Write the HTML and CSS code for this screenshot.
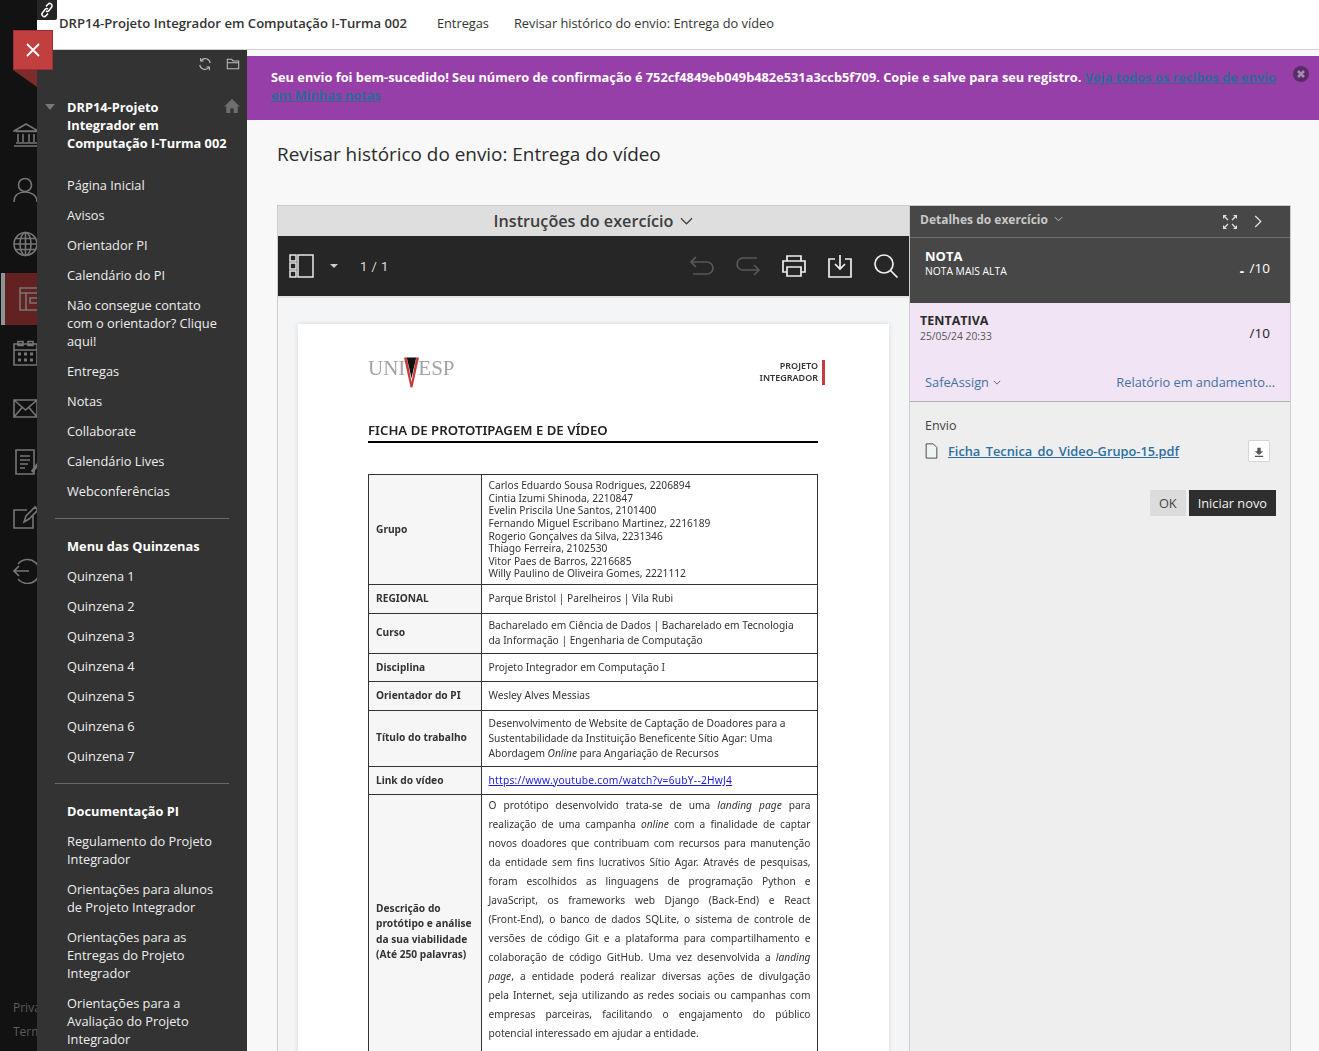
FILE: index.html
```html
<!DOCTYPE html>
<html lang="pt-BR">
  <head>
    <meta charset="UTF-8" />
    <meta name="viewport" content="width=device-width, initial-scale=1.0" />
    <title>Revisar histórico do envio</title>
    <link rel="stylesheet" href="styles.css">
  </head>
  <body>
    <div class="app">
      <!-- rail behind the course menu -->
      <nav class="rail">
        <div class="rail-item"><svg viewBox="0 0 26 26"><path d="M1 9 13 2l12 7zM3 9.500h21M5 12v8M10 12v8M16 12v8M21 12v8M3 21h21M1 24h25"/></svg></div>
        <div class="rail-item"><svg viewBox="0 0 26 26"><circle cx="12" cy="8" r="6.500"/><path d="M1 25c0-7 5-10 11-10s12 3 12 10"/></svg></div>
        <div class="rail-item"><svg viewBox="0 0 26 26"><circle cx="12.500" cy="13" r="11.500"/><ellipse cx="12.500" cy="13" rx="5.500" ry="11.500"/><path d="M12.500 1.500v23M1 13h23M2.500 7.500h20M2.500 18.500h20"/></svg></div>
        <div class="rail-item active"><svg viewBox="0 0 26 26"><path d="M1 2h24v22H1zM1 7h24M7 7v17M11 12h9v5h-9z"/></svg></div>
        <div class="rail-item"><svg viewBox="0 0 26 26"><path d="M1 4h23v21H1zM1 10h23M5 1.500h5v4H5zM15 1.500h5v4h-5z"/><path class="dots" d="M5 14h3M11 14h3M17 14h3M5 20h3M11 20h3M17 20h3"/></svg></div>
        <div class="rail-item"><svg viewBox="0 0 26 26"><path d="M1 5h23v17H1zM1 5l11.500 10L24 5M1 22l8.500-10M24 22l-8.500-10"/></svg></div>
        <div class="rail-item"><svg viewBox="0 0 26 26"><path d="M3 1h18v24H3zM7 7h10M7 11h10M7 15h8M7 19h5"/><path class="dots" d="m19 23 6-8"/></svg></div>
        <div class="rail-item"><svg viewBox="0 0 26 26"><path d="M20 12v12H1V6h13M11 18l2-6L22 3l3 3-9 9z"/></svg></div>
        <div class="rail-item"><svg viewBox="0 0 26 26"><path d="M5 6a12 12 0 1 1 0 15M1 13h15M6 8l-5 5 5 5"/></svg></div>
        <div class="rail-foot">
          <p>Privacy</p>
          <p>Terms</p>
        </div>
      </nav>

      <div class="link-tab">
        <svg viewBox="0 0 16 16"><path d="M7 4.500 9 2.300a2.300 2.300 0 0 1 3.500 3L10 8.500a2.300 2.300 0 0 1-3 .5M9 11.500 7 13.700a2.300 2.300 0 0 1-3.500-3L6 7.500a2.300 2.300 0 0 1 3-.5"/></svg>
      </div>
      <button class="menu-close">
        <svg viewBox="0 0 16 16"><path d="M2 2l12 12M14 2 2 14"/></svg>
      </button>

      <div class="page">
        <header class="topbar">
          <b>DRP14-Projeto Integrador em Computação I-Turma 002</b>
          <span class="crumb">Entregas</span>
          <span class="crumb">Revisar histórico do envio: Entrega do vídeo</span>
        </header>

        <div class="body-row">
          <aside class="menu">
            <div class="menu-tools">
              <svg viewBox="0 0 16 16"><path d="M14 7A6 6 0 0 0 3.500 4M2 9a6 6 0 0 0 10.500 3M3 1v3.500h3.500M13 15v-3.500H9.500"/></svg>
              <svg viewBox="0 0 16 16"><path d="M1.500 13.500v-11h5l1.500 2h6.500v9zM1.500 6.500h13"/></svg>
            </div>
            <div class="course">
              <span class="course-arrow"></span>
              <span class="course-name">DRP14-Projeto<br>Integrador em<br>Computação I-Turma 002</span>
              <svg class="course-home" viewBox="0 0 16 16"><path d="M8 1 0 8.500h2.300V15h4v-4.500h3.400V15h4V8.500H16z"/></svg>
            </div>
            <ul class="menu-list">
              <li>Página Inicial</li>
              <li>Avisos</li>
              <li>Orientador PI</li>
              <li>Calendário do PI</li>
              <li>Não consegue contato com o orientador? Clique aqui!</li>
              <li>Entregas</li>
              <li>Notas</li>
              <li>Collaborate</li>
              <li>Calendário Lives</li>
              <li>Webconferências</li>
            </ul>
            <hr class="menu-sep">
            <ul class="menu-list">
              <li class="menu-head">Menu das Quinzenas</li>
              <li>Quinzena 1</li>
              <li>Quinzena 2</li>
              <li>Quinzena 3</li>
              <li>Quinzena 4</li>
              <li>Quinzena 5</li>
              <li>Quinzena 6</li>
              <li>Quinzena 7</li>
            </ul>
            <hr class="menu-sep">
            <ul class="menu-list">
              <li class="menu-head">Documentação PI</li>
              <li>Regulamento do Projeto Integrador</li>
              <li>Orientações para alunos de Projeto Integrador</li>
              <li>Orientações para as Entregas do Projeto Integrador</li>
              <li>Orientações para a Avaliação do Projeto Integrador</li>
            </ul>
          </aside>

          <main class="content">
            <div class="banner">
              <p><b>Seu envio foi bem-sucedido! Seu número de confirmação é 752cf4849eb049b482e531a3ccb5f709. Copie e salve para seu registro.</b> <a href="#">Veja todos os recibos de envio em Minhas notas</a></p>
              <span class="banner-close">
                <svg viewBox="0 0 16 16"><path d="M5 5l6 6M11 5l-6 6"/></svg>
              </span>
            </div>
            <h1>Revisar histórico do envio: Entrega do vídeo</h1>

            <section class="panel">
              <div class="viewer">
                <div class="viewer-head">Instruções do exercício
                  <svg viewBox="0 0 14 8"><path d="M1 1l6 6 6-6"/></svg>
                </div>
                <div class="toolbar">
                  <svg class="tool-side" viewBox="0 0 26 24"><path d="M1 1h6v6H1zM1 9h6v6H1zM1 17h6v6H1zM9 1h15v22H9z"/></svg>
                  <span class="tool-caret"></span>
                  <span class="tool-pages">1 / 1</span>
                  <span class="tool-space"></span>
                  <svg class="tool dim" viewBox="0 0 26 24"><path d="M7 3 2 8l5 5M2 8h16a5.500 5.500 0 0 1 0 12H4"/></svg>
                  <svg class="tool dim" viewBox="0 0 26 24"><path d="M19 21l5-5-5-5M24 16H8A5.500 5.500 0 0 1 8 4h14"/></svg>
                  <svg class="tool" viewBox="0 0 26 24"><path d="M6 7V2h14v5M6 18H2V7h22v11h-4M6 13h14v9H6z"/></svg>
                  <svg class="tool" viewBox="0 0 26 24"><path d="M8 5H2v18h22V5h-6M13 1v14M8 10l5 5 5-5"/></svg>
                  <svg class="tool" viewBox="0 0 26 24"><circle cx="11" cy="10" r="9"/><path d="m17.500 16.500 7 7"/></svg>
                </div>
                <div class="doc-area">
                  <article class="doc">
                    <div class="doc-top">
                      <div class="logo">
                        <span>UNI</span>
                        <svg viewBox="0 0 16 32"><path class="logo-red" d="M0 0h3l5 26 5-26h3L9 32H7z"/><path class="logo-black" d="M3 0h10L8 22z"/></svg>
                        <span>ESP</span>
                      </div>
                      <div class="doc-tag">PROJETO<br>INTEGRADOR</div>
                    </div>
                    <h2>FICHA DE PROTOTIPAGEM E DE VÍDEO</h2>
                    <table class="sheet">
                      <tr class="row-grupo">
                        <th>Grupo</th>
                        <td class="tight">Carlos Eduardo Sousa Rodrigues, 2206894<br>Cintia Izumi Shinoda, 2210847<br>Evelin Priscila Une Santos, 2101400<br>Fernando Miguel Escribano Martinez, 2216189<br>Rogerio Gonçalves da Silva, 2231346<br>Thiago Ferreira, 2102530<br>Vitor Paes de Barros, 2216685<br>Willy Paulino de Oliveira Gomes, 2221112</td>
                      </tr>
                      <tr class="row-a">
                        <th>REGIONAL</th>
                        <td>Parque Bristol | Parelheiros | Vila Rubi</td>
                      </tr>
                      <tr class="row-b">
                        <th>Curso</th>
                        <td>Bacharelado em Ciência de Dados | Bacharelado em Tecnologia<br>da Informação | Engenharia de Computação</td>
                      </tr>
                      <tr class="row-a">
                        <th>Disciplina</th>
                        <td>Projeto Integrador em Computação I</td>
                      </tr>
                      <tr class="row-a">
                        <th>Orientador do PI</th>
                        <td>Wesley Alves Messias</td>
                      </tr>
                      <tr class="row-c">
                        <th>Título do trabalho</th>
                        <td>Desenvolvimento de Website de Captação de Doadores para a<br>Sustentabilidade da Instituição Beneficente Sítio Agar: Uma<br>Abordagem <i>Online</i> para Angariação de Recursos</td>
                      </tr>
                      <tr class="row-a">
                        <th>Link do vídeo</th>
                        <td><a href="#">https://www.youtube.com/watch?v=6ubY--2HwJ4</a></td>
                      </tr>
                      <tr class="row-d">
                        <th>Descrição do protótipo e análise da sua viabilidade (Até 250 palavras)</th>
                        <td class="desc">
                          <p>O protótipo desenvolvido trata-se de uma <i>landing page</i> para</p>
                          <p>realização de uma campanha <i>online</i> com a finalidade de captar</p>
                          <p>novos doadores que contribuam com recursos para manutenção</p>
                          <p>da entidade sem fins lucrativos Sítio Agar. Através de pesquisas,</p>
                          <p>foram escolhidos as linguagens de programação Python e</p>
                          <p>JavaScript, os frameworks web Django (Back-End) e React</p>
                          <p>(Front-End), o banco de dados SQLite, o sistema de controle de</p>
                          <p>versões de código Git e a plataforma para compartilhamento e</p>
                          <p>colaboração de código GitHub. Uma vez desenvolvida a <i>landing</i></p>
                          <p><i>page</i>, a entidade poderá realizar diversas ações de divulgação</p>
                          <p>pela Internet, seja utilizando as redes sociais ou campanhas com</p>
                          <p>empresas parceiras, facilitando o engajamento do público</p>
                          <p class="last">potencial interessado em ajudar a entidade.</p>
                        </td>
                      </tr>
                    </table>
                  </article>
                </div>
              </div>

              <div class="details">
                <div class="details-head">
                  <span class="details-title">Detalhes do exercício
                    <svg viewBox="0 0 10 6"><path d="M1 1l4 4 4-4"/></svg>
                  </span>
                  <svg class="expand" viewBox="0 0 16 16"><path class="expand-tip" d="M1 1h4L1 5zM15 1h-4l4 4zM1 15h4l-4-4zM15 15h-4l4-4z"/><path d="M3 3l3 3M13 3l-3 3M3 13l3-3M13 13l-3-3"/></svg>
                  <svg class="next" viewBox="0 0 8 14"><path d="M1 1l6 6-6 6"/></svg>
                </div>
                <div class="grade">
                  <div>
                    <strong>NOTA</strong>
                    <small>NOTA MAIS ALTA</small>
                  </div>
                  <span class="score"><b class="dash">-</b> /10</span>
                </div>
                <div class="attempt">
                  <div class="attempt-top">
                    <div>
                      <strong>TENTATIVA</strong>
                      <small>25/05/24 20:33</small>
                    </div>
                    <span class="score">/10</span>
                  </div>
                  <div class="attempt-links">
                    <a href="#">SafeAssign <svg viewBox="0 0 10 6"><path d="M1 1l4 4 4-4"/></svg></a>
                    <a href="#">Relatório em andamento...</a>
                  </div>
                </div>
                <div class="submission">
                  <p class="sub-label">Envio</p>
                  <div class="file">
                    <svg class="file-icon" viewBox="0 0 14 18"><path d="M1 1h8l4 4v12H1z"/></svg>
                    <a href="#">Ficha_Tecnica_do_Video-Grupo-15.pdf</a>
                    <span class="file-get"><svg viewBox="0 0 12 12"><path d="M4 1h4v4h3L6 9.500 1 5h3zM1 10.500h10V12H1z"/></svg></span>
                  </div>
                  <div class="actions">
                    <button class="btn">OK</button>
                    <button class="btn dark">Iniciar novo</button>
                  </div>
                </div>
              </div>
            </section>
          </main>
        </div>
      </div>
    </div>
  </body>
</html>
```

FILE: styles.css
```css
* {
  margin: 0;
  padding: 0;
  box-sizing: border-box;
}
html,
body {
  height: 100%;
  overflow: hidden;
}
body {
  font-family: "Open Sans", Arial, sans-serif;
  font-size: 12.8px;
  color: #333;
  background: #121212;
}
ul {
  list-style: none;
}
svg {
  fill: none;
  display: block;
}
a {
  color: inherit;
}
button {
  font-family: inherit;
  border: none;
}
.app {
  position: relative;
  display: flex;
  height: 1051px;
  overflow: hidden;
}

/* rail */
.rail {
  position: relative;
  flex: 0 0 37px;
  width: 37px;
  padding-top: 108px;
  background: #121212;
  overflow: hidden;
}
.rail-item {
  height: 54.500px;
  padding: 14px 0 0 13px;
}
.rail-item svg {
  width: 26px;
  height: 26px;
  stroke: #767676;
  stroke-width: 1.600;
}
.rail-item .dots {
  stroke-width: 3;
}
.rail-item.active {
  height: 52px;
  margin: 1px 0 1.500px 1px;
  padding: 13px 0 0 14px;
  background: #632121;
  border-left: 4px solid #8f9496;
}
.rail-foot {
  position: absolute;
  left: 13px;
  bottom: 7px;
  color: #5c5c5c;
  font-size: 12px;
  line-height: 24px;
}
.link-tab {
  position: absolute;
  left: 37px;
  top: 0;
  z-index: 3;
  width: 20px;
  height: 20px;
  padding: 2px;
  background: #262626;
  border-bottom-right-radius: 2px;
}
.link-tab svg {
  width: 16px;
  height: 16px;
  stroke: #fff;
  stroke-width: 1.500;
}
.menu-close {
  position: absolute;
  left: 13px;
  top: 30px;
  z-index: 3;
  width: 40px;
  height: 40px;
  padding: 11px;
  background: #c13f3f;
  border: 1px solid #9c2f2f;
}
.menu-close svg {
  width: 16px;
  height: 16px;
  stroke: #fff;
  stroke-width: 1.800;
}
.menu-close::before {
  content: "";
  position: absolute;
  left: -1px;
  top: 39px;
  width: 24px;
  height: 17px;
  background: #7e2b2b;
  clip-path: polygon(0 0, 100% 0, 100% 100%);
}

/* top bar */
.page {
  flex: 1;
  min-width: 0;
  display: flex;
  flex-direction: column;
}
.topbar {
  flex: 0 0 50px;
  display: flex;
  align-items: center;
  padding: 0 0 3px 22px;
  background: #fff;
  border-bottom: 1px solid #cfcfcf;
  color: #333;
}
.topbar b {
  font-size: 13.100px;
  font-weight: 600;
  margin-right: 30px;
}
.crumb {
  margin-right: 25px;
}
.body-row {
  flex: 1;
  display: flex;
  min-height: 0;
}

/* course menu */
.menu {
  flex: 0 0 210px;
  width: 210px;
  background: #333;
  color: #eee;
  overflow: hidden;
}
.menu-tools {
  display: flex;
  justify-content: flex-end;
  gap: 14px;
  height: 48px;
  padding: 7px 7px 0 0;
}
.menu-tools svg {
  width: 14px;
  height: 14px;
  stroke: #bdbdbd;
  stroke-width: 1.200;
}
.course {
  position: relative;
  padding: 0 10px 0 30px;
  margin-bottom: 18px;
  font-weight: 700;
  line-height: 18px;
  color: #fff;
}
.course-arrow {
  position: absolute;
  left: 8px;
  top: 6px;
  border-top: 6px solid #777;
  border-left: 5.500px solid transparent;
  border-right: 5.500px solid transparent;
}
.course-home {
  position: absolute;
  right: 7px;
  top: 0;
  width: 16px;
  height: 16px;
  fill: #6e6e6e;
}
.menu-list li {
  padding: 6px 20px 6px 30px;
  line-height: 18px;
}
.menu-list .menu-head {
  font-weight: 700;
  color: #fff;
}
.menu-sep {
  width: 174px;
  margin: 12px 0 12px 18px;
  border: none;
  border-top: 1px solid #6a6a6a;
}

/* main column */
.content {
  flex: 1;
  min-width: 0;
  background: #f8f8f8;
  padding-top: 6px;
  overflow: hidden;
}
.banner {
  position: relative;
  height: 64px;
  padding: 12px 42px 0 24px;
  background: #973fa9;
  line-height: 18px;
  color: #fff;
}
.banner b {
  font-weight: 700;
}
.banner a {
  color: #2f6a97;
  font-weight: 700;
}
.banner-close {
  position: absolute;
  right: 10px;
  top: 10px;
  width: 16px;
  height: 16px;
  border-radius: 50%;
  background: #5a2c6a;
}
.banner-close svg {
  stroke: #a88bb0;
  stroke-width: 2.500;
}
h1 {
  margin: 21px 0 38px 30px;
  font-size: 18.900px;
  font-weight: 400;
  line-height: 26px;
  color: #2b2b2b;
}

/* panel */
.panel {
  display: flex;
  height: 900px;
  margin: 0 28px 0 30px;
  border: 1px solid #ccc;
  border-bottom: none;
}
.viewer {
  flex: 0 0 631px;
  width: 631px;
  display: flex;
  flex-direction: column;
}
.viewer-head {
  flex: 0 0 30px;
  display: flex;
  align-items: center;
  justify-content: center;
  gap: 7px;
  background: #dedede;
  font-size: 16.200px;
  font-weight: 600;
  color: #3d3d3d;
}
.viewer-head svg {
  width: 13px;
  height: 8px;
  stroke: #444;
  stroke-width: 1.400;
}
.toolbar {
  flex: 0 0 60px;
  display: flex;
  align-items: center;
  background: #262626;
  color: #ddd;
  padding: 0 10px 0 11px;
}
.tool-side {
  width: 26px;
  height: 24px;
  stroke: #e8e8e8;
  stroke-width: 1.500;
}
.tool-caret {
  margin-left: 15px;
  border-top: 4px solid #ccc;
  border-left: 4px solid transparent;
  border-right: 4px solid transparent;
}
.tool-pages {
  margin-left: 22px;
  font-family: Roboto, Arial, sans-serif;
  font-size: 13px;
  letter-spacing: 0.500px;
}
.tool-space {
  flex: 1;
}
.tool {
  width: 26px;
  height: 24px;
  margin-left: 20px;
  stroke: #eee;
  stroke-width: 1.700;
}
.tool.dim {
  stroke: #585858;
}
.doc-area {
  flex: 1;
  background: #f4f5f7;
  padding: 26px 20px 0;
  border-top: 2px solid #e4e4e4;
  overflow: hidden;
}

/* the pdf page */
.doc {
  width: 591px;
  height: 800px;
  padding: 32px 71px 0 70px;
  background: #fff;
  box-shadow: 0 0 5px rgba(0, 0, 0, 0.12);
  font-family: "Noto Sans", Arial, sans-serif;
  color: #333;
  filter: blur(0.300px);
}
.doc-top {
  display: flex;
  justify-content: space-between;
  height: 64px;
  margin-right: -7px;
}
.logo {
  display: flex;
  align-items: flex-start;
  font-family: "Liberation Serif", serif;
  font-size: 21px;
  line-height: 24px;
  color: #a3a3a3;
}
.logo svg {
  width: 15px;
  height: 31px;
  margin: 1px -1px 0;
}
.logo-red {
  fill: #c63c3c;
}
.logo-black {
  fill: #111;
}
.doc-tag {
  padding-right: 4px;
  border-right: 3px solid #c63c3c;
  height: 25px;
  margin-top: 4px;
  font-size: 9px;
  font-weight: 600;
  line-height: 12px;
  text-align: right;
  color: #333;
}
.doc h2 {
  padding-bottom: 1px;
  border-bottom: 2px solid #000;
  font-size: 13.200px;
  font-weight: 600;
  line-height: 20px;
  color: #222;
}
.sheet {
  width: 450px;
  margin-top: 31px;
  border-collapse: collapse;
  table-layout: fixed;
  font-size: 10.200px;
}
.sheet th,
.sheet td {
  border: 1.500px solid #333;
  vertical-align: middle;
  text-align: left;
}
.sheet th {
  width: 113px;
  padding: 0 7px;
  background: #f6f6f6;
  font-weight: 700;
  line-height: 15.500px;
}
.sheet td {
  padding: 0 6.500px;
  line-height: 15px;
}
.sheet a {
  color: #1a1ad6;
  letter-spacing: 0.250px;
}
.sheet .tight {
  line-height: 12.600px;
}
.row-grupo {
  height: 110px;
}
.row-a {
  height: 28.500px;
}
.row-b {
  height: 40px;
}
.row-c {
  height: 56px;
}
.row-d {
  height: 274px;
}
.desc {
  padding-top: 1px !important;
  vertical-align: top !important;
}
.desc p {
  line-height: 19px;
  text-align: justify;
  text-align-last: justify;
}
.desc .last {
  text-align-last: left;
}

/* details column */
.details {
  flex: 1;
  min-width: 0;
  background: #eee;
  border-left: 1px solid #ccc;
  display: flex;
  flex-direction: column;
}
.details-head {
  flex: 0 0 32px;
  display: flex;
  align-items: center;
  padding: 0 28px 5px 10px;
  background: #474747;
  border-bottom: 1px solid #6c6c6c;
  color: #c8c8c8;
  font-size: 12px;
  font-weight: 700;
}
.details-title {
  flex: 1;
  display: flex;
  align-items: center;
  gap: 6px;
}
.details-title svg {
  width: 9px;
  height: 6px;
  stroke: #c8c8c8;
}
.expand {
  width: 16px;
  height: 16px;
  margin: 5px 16px 0 0;
  stroke: #e0e0e0;
  stroke-width: 1.300;
}
.expand-tip {
  fill: #e0e0e0;
  stroke: none;
}
.next {
  width: 8px;
  height: 13px;
  margin-top: 5px;
  stroke: #ddd;
  stroke-width: 1.400;
}
.grade {
  flex: 0 0 65px;
  display: flex;
  justify-content: space-between;
  padding: 10px 20px 0 15px;
  background: #474747;
  color: #fff;
}
.grade strong,
.attempt strong {
  display: block;
  font-size: 13px;
  font-weight: 700;
  line-height: 16px;
}
.grade small {
  display: block;
  font-size: 10.300px;
  line-height: 14px;
}
.score {
  font-size: 13.500px;
  margin-top: 11px;
}
.dash {
  margin-right: 2px;
  vertical-align: -3px;
}
.attempt {
  flex: 0 0 99px;
  padding: 10px 15px 0 10px;
  background: #f1e4f5;
  border-bottom: 1px solid #b5b5b5;
}
.attempt-top {
  display: flex;
  justify-content: space-between;
  padding-right: 5px;
  height: 60px;
}
.attempt strong {
  font-size: 12.500px;
  color: #2b2b2b;
}
.attempt small {
  display: block;
  font-size: 10.300px;
  line-height: 14px;
  color: #555;
}
.attempt .score {
  margin-top: 11px;
  color: #222;
}
.attempt-links {
  display: flex;
  justify-content: space-between;
  padding-left: 5px;
  line-height: 18px;
}
.attempt-links a {
  display: flex;
  align-items: center;
  gap: 4px;
  color: #3f73a3;
  text-decoration: none;
}
.attempt-links svg {
  width: 8px;
  height: 5px;
  stroke: #444;
}
.submission {
  flex: 1;
  padding: 16px 14px 0 15px;
}
.sub-label {
  font-size: 12.500px;
  line-height: 16px;
  color: #444;
}
.file {
  display: flex;
  align-items: center;
  margin-top: 6px;
  height: 22px;
}
.file-icon {
  width: 13px;
  height: 16px;
  margin-right: 10px;
  stroke: #3a3a3a;
  fill: #eef4f4;
}
.file a {
  flex: 1;
  font-weight: 600;
  color: #2f6f9e;
}
.file-get {
  width: 22px;
  height: 22px;
  margin-right: 6px;
  padding: 6px 5px;
  background: #fff;
  border: 1px solid #d4d4d4;
  border-radius: 2px;
}
.file-get svg {
  width: 10px;
  height: 10px;
  fill: #555;
}
.actions {
  display: flex;
  justify-content: flex-end;
  gap: 3px;
  margin-top: 28px;
}
.btn {
  height: 26px;
  padding: 0 9px;
  background: #dcdcdc;
  color: #444;
  font-size: 12.800px;
}
.btn.dark {
  background: #2e2e2e;
  color: #f2f2f2;
}
```
